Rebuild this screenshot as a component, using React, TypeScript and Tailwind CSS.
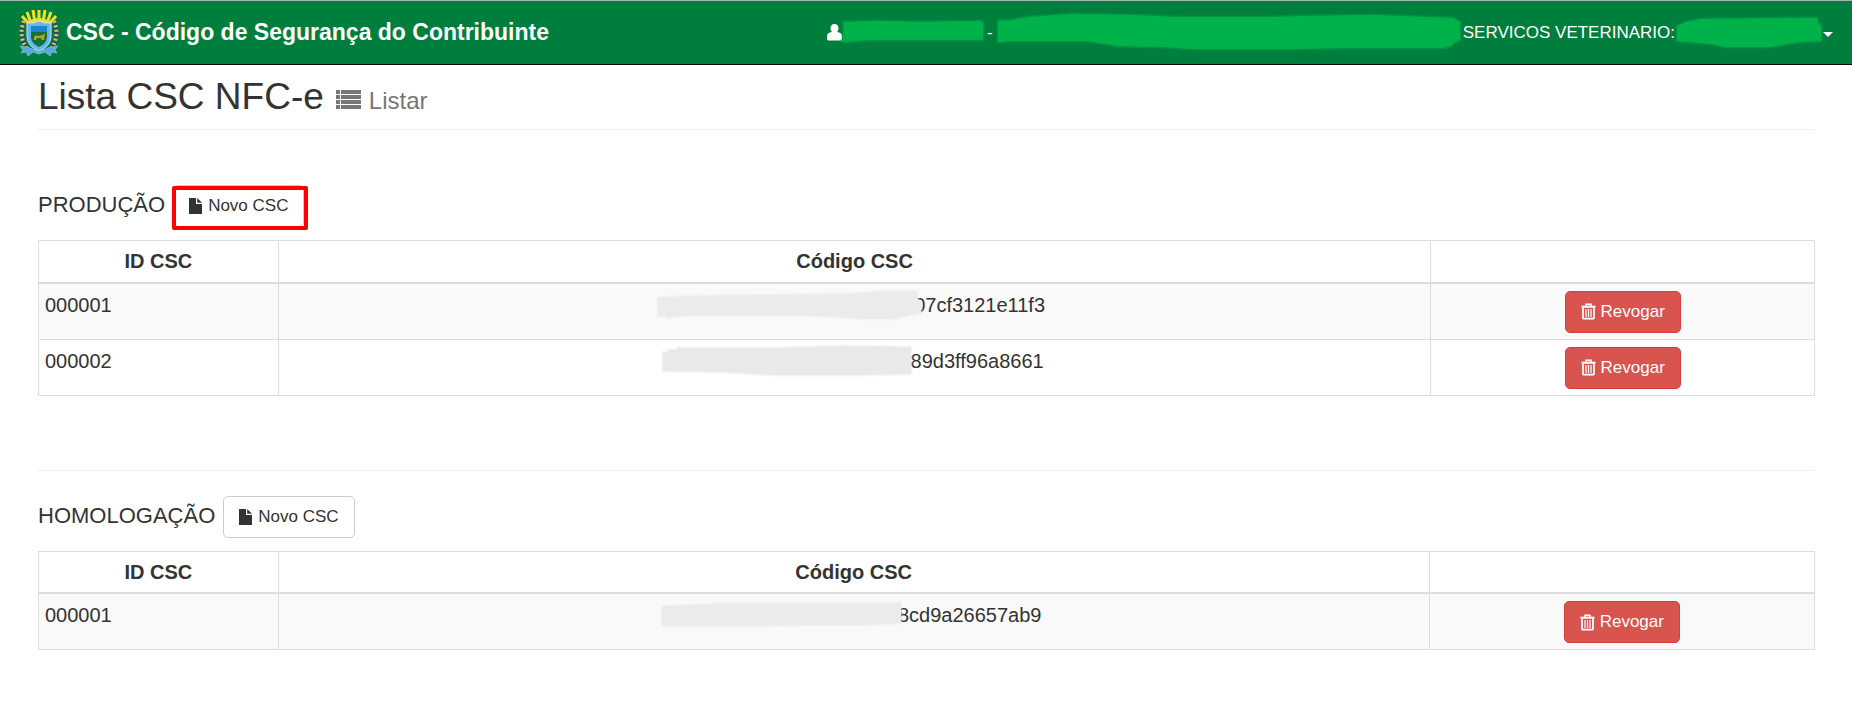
import React from "react";

interface CscItem {
  id: string;
  code: string;
  mask: React.ReactNode;
}

const ListIcon: React.FC = () => (
  <svg width="25" height="19" viewBox="0 0 25 19" fill="currentColor" className="inline-block" aria-hidden="true">
    {[0, 5, 10, 15].map((y) => (
      <g key={y}>
        <rect x="0" y={y} width="4" height="4" />
        <rect x="5" y={y} width="20" height="4" />
      </g>
    ))}
  </svg>
);

const FileIcon: React.FC = () => (
  <svg width="14" height="16" viewBox="0 0 14 16" fill="currentColor" aria-hidden="true">
    <path d="M0 0h7v6h6v10H0z" />
    <path d="M8.200 0 13 4.800H8.200z" />
  </svg>
);

const TrashIcon: React.FC = () => (
  <svg width="15" height="17" viewBox="0 0 15 17" fill="none" stroke="currentColor" aria-hidden="true">
    <path d="M5 3V1.200h5V3" strokeWidth="1.500" />
    <path d="M.5 3.700h14" strokeWidth="2" />
    <path d="M2 4.500v10.200a1 1 0 0 0 1 1h9a1 1 0 0 0 1-1V4.500" strokeWidth="1.800" />
    <path d="M5 6v8M7.500 6v8M10 6v8" strokeWidth="1.200" />
  </svg>
);

const UserIcon: React.FC = () => (
  <svg width="15" height="17" viewBox="0 0 15 17" fill="currentColor" aria-hidden="true">
    <path d="M7.500 0C10 0 11.500 1.900 11.500 4.300c0 1.600-.6 2.900-1.500 3.800 3.200.3 5 1.700 5 4.200V15q0 1.500-1.500 1.500h-12Q0 16.500 0 15V12.300c0-2.500 1.800-3.900 5-4.200C4.100 7.200 3.500 5.900 3.500 4.300 3.500 1.900 5 0 7.500 0z" />
  </svg>
);

const Emblem: React.FC = () => (
  <svg width="40" height="47" viewBox="0 0 40 47" aria-hidden="true">
    {/* Sun rays */}
    <g stroke="#f0e02c" strokeWidth="3">
      <path d="M20 14V1M16 14 14 1M24 14 26 1M12 14 8 3M28 14 32 3M10 15 3 7M30 15 37 7" />
    </g>
    <path d="M7 14Q20 4 33 14z" fill="#f0e02c" />
    {/* Branches */}
    <g fill="none">
      <path d="M5 12Q-1 27 8 40" stroke="#27505a" strokeWidth="5" />
      <path d="M35 12Q41 27 32 40" stroke="#27505a" strokeWidth="5" />
      <path d="M5 12Q-1 27 8 40" stroke="#cfc95e" strokeWidth="4" strokeDasharray="2 2.500" />
      <path d="M35 12Q41 27 32 40" stroke="#cfc95e" strokeWidth="4" strokeDasharray="2 2.500" />
    </g>
    {/* Ribbon */}
    <path d="M1 37 9 38 20 43 31 38 39 37 36 41 38 44 33 43 31 47 26 43 20 45 14 43 9 47 7 43 2 44 4 41z" fill="#5aa9e4" stroke="#a9d2ef" strokeWidth=".5" />
    {/* Shield */}
    <path d="M8 14Q14 15 20 12 26 15 32 14V28Q31 38 20 42 9 38 8 28z" fill="#67b6ef" stroke="#c3e4f6" />
    <path d="M12 17H28V23H12z" fill="#1d84d2" />
    <path d="M12 23H28V29Q27 35 20 38 13 35 12 29z" fill="#14703c" />
    <path d="M15 28Q17 25 19 27L24 26 26 24 25 31H23L22 29H18L17 31H15z" fill="#b3a51d" />
  </svg>
);

interface MaskProps {
  width: number;
  height: number;
  d: string;
  color: string;
  className?: string;
}

// Brush stroke that hides private data
const Mask: React.FC<MaskProps> = ({ width, height, d, color, className }) => (
  <svg
    width={width}
    height={height}
    viewBox={`0 0 ${width} ${height}`}
    className={`relative shrink-0 overflow-visible ${className ?? ""}`}
    aria-hidden="true"
  >
    <path d={d} fill={color} stroke={color} strokeWidth="3" strokeOpacity=".4" strokeLinejoin="round" />
  </svg>
);

const NewButton: React.FC<{ highlighted?: boolean }> = ({ highlighted }) => (
  <span className="relative inline-flex">
    <button
      type="button"
      className="flex h-[42px] items-center gap-[5px] rounded-[5px] border border-[#ccc] bg-white px-[15px] text-[17px] text-[#333]"
    >
      <FileIcon />
      Novo CSC
    </button>
    {highlighted && (
      <span className="pointer-events-none absolute top-px -right-1 -bottom-[3px] -left-px rounded-[2px] border-4 border-[#fe0000]" />
    )}
  </span>
);

interface CscTableProps {
  label: string;
  items: CscItem[];
  idWidth: string;
  actionWidth: string;
}

const CscTable: React.FC<CscTableProps> = ({ label, items, idWidth, actionWidth }) => (
  <table aria-label={label} className="w-full table-fixed border-collapse border border-[#ddd] text-[20px] leading-7">
    <thead>
      <tr className="h-[42px]">
        <th className={`${idWidth} border border-b-2 border-[#ddd] p-1.5`}>ID CSC</th>
        <th className="border border-b-2 border-[#ddd] p-1.5">Código CSC</th>
        <th className={`${actionWidth} border border-b-2 border-[#ddd] p-1.5`}></th>
      </tr>
    </thead>
    <tbody>
      {items.map((item) => (
        <tr key={item.id} className="odd:bg-[#f9f9f9]">
          <td className="border border-[#ddd] px-1.5 pt-[7px] pb-1.5 align-top">{item.id}</td>
          <td className="border border-[#ddd] px-1.5 pt-[7px] pb-1.5 align-top">
            <div className="flex h-7 items-center justify-center">
              {item.mask}
              <span>{item.code}</span>
            </div>
          </td>
          <td className="border border-[#ddd] px-1.5 pt-[7px] pb-1.5">
            <button
              type="button"
              className="mx-auto flex h-[42px] items-center gap-[5px] rounded-[5px] border border-[#d43f3a] bg-[#d9534f] px-[15px] text-[17px] text-white"
            >
              <TrashIcon />
              Revogar
            </button>
          </td>
        </tr>
      ))}
    </tbody>
  </table>
);

const production: CscItem[] = [
  {
    id: "000001",
    code: "07cf3121e11f3",
    mask: (
      <Mask
        width={266}
        height={32}
        color="#ebebeb"
        className="-mr-2 -ml-2"
        d="M2 9 30 7 110 6 195 5 225 2 255 2 261 3V9L265 14V24L250 27 235 30 210 30 165 27 100 26 20 27 12 29 10 27 2 27z"
      />
    ),
  },
  {
    id: "000002",
    code: "89d3ff96a8661",
    mask: (
      <Mask
        width={249}
        height={32}
        color="#e9e9e9"
        className="-ml-1"
        d="M1 7H6V5H15V3L110 3 180 1 249 2V29L200 30H110L60 27 1 26z"
      />
    ),
  },
];

const homologation: CscItem[] = [
  {
    id: "000001",
    code: "8cd9a26657ab9",
    mask: (
      <Mask
        width={242}
        height={28}
        color="#ebebeb"
        className="-mr-1 -ml-1.5"
        d="M2 5 40 4 60 2H241V22L205 24 150 24 80 25H4L2 23z"
      />
    ),
  },
];

const Header: React.FC = () => (
  <header className="flex h-[65px] items-center justify-between border-t border-b border-t-[#a3b5b5] border-b-[#080808] bg-[#007e3e] pr-[19px] pl-[19px] text-white">
    <a href="#" className="flex items-center gap-[7px] text-[23px] font-bold whitespace-nowrap">
      <Emblem />
      CSC - Código de Segurança do Contribuinte
    </a>
    <button type="button" className="flex items-center text-[17px] whitespace-nowrap">
      <UserIcon />
      <Mask
        width={149}
        height={38}
        color="#00b24a"
        className="-ml-1"
        d="M6 8 40 7 80 8 143 7 145 9V25L142 26H30L5 28 3 27 5 25z"
      />
      <span>-</span>
      <Mask
        width={470}
        height={40}
        color="#00b24a"
        d="M5 8 20 7 35 4 78 1 140 2 185 4 275 4 310 3 380 2 460 5 463 7 467 9V27L460 30 458 33 450 35H350L300 36 200 36 170 34 125 33 95 28 15 28 10 29H5V13z"
      />
      <span>SERVICOS VETERINARIO:</span>
      <Mask
        width={149}
        height={38}
        color="#00b24a"
        className="-ml-px"
        d="M3 12 12 8 27 5 143 4 144 9 147 12V27L125 28 95 33H52L38 30 3 27z"
      />
      <svg width="10" height="5" viewBox="0 0 10 5" fill="currentColor" className="mt-1" aria-hidden="true">
        <path d="M0 0H10L5 5z" />
      </svg>
    </button>
  </header>
);

export default function App() {
  return (
    <div className="font-['Liberation_Sans',Arial,sans-serif] text-[#333]">
      <Header />
      <main className="pr-[37px] pl-[38px]">
        <h1 className="flex h-[65px] items-baseline gap-3 border-b border-[#eee] pt-2 text-[37px] leading-[48px]">
          Lista CSC NFC-e
          <small className="flex items-baseline gap-2 text-[24px] text-[#777]">
            <ListIcon />
            Listar
          </small>
        </h1>

        <section className="pt-[55px]">
          <h2 className="mb-[13px] flex items-start gap-2 text-[22px] leading-10">
            PRODUÇÃO
            <NewButton highlighted />
          </h2>
          <CscTable label="Produção" items={production} idWidth="w-[13.5%]" actionWidth="w-[21.6%]" />
        </section>

        <hr className="mt-[74px] border-[#eee]" />

        <section className="pt-[25px]">
          <h2 className="mb-[13px] flex items-start gap-2 text-[22px] leading-10">
            HOMOLOGAÇÃO
            <NewButton />
          </h2>
          <CscTable label="Homologação" items={homologation} idWidth="w-[13.5%]" actionWidth="w-[21.7%]" />
        </section>
      </main>
    </div>
  );
}
